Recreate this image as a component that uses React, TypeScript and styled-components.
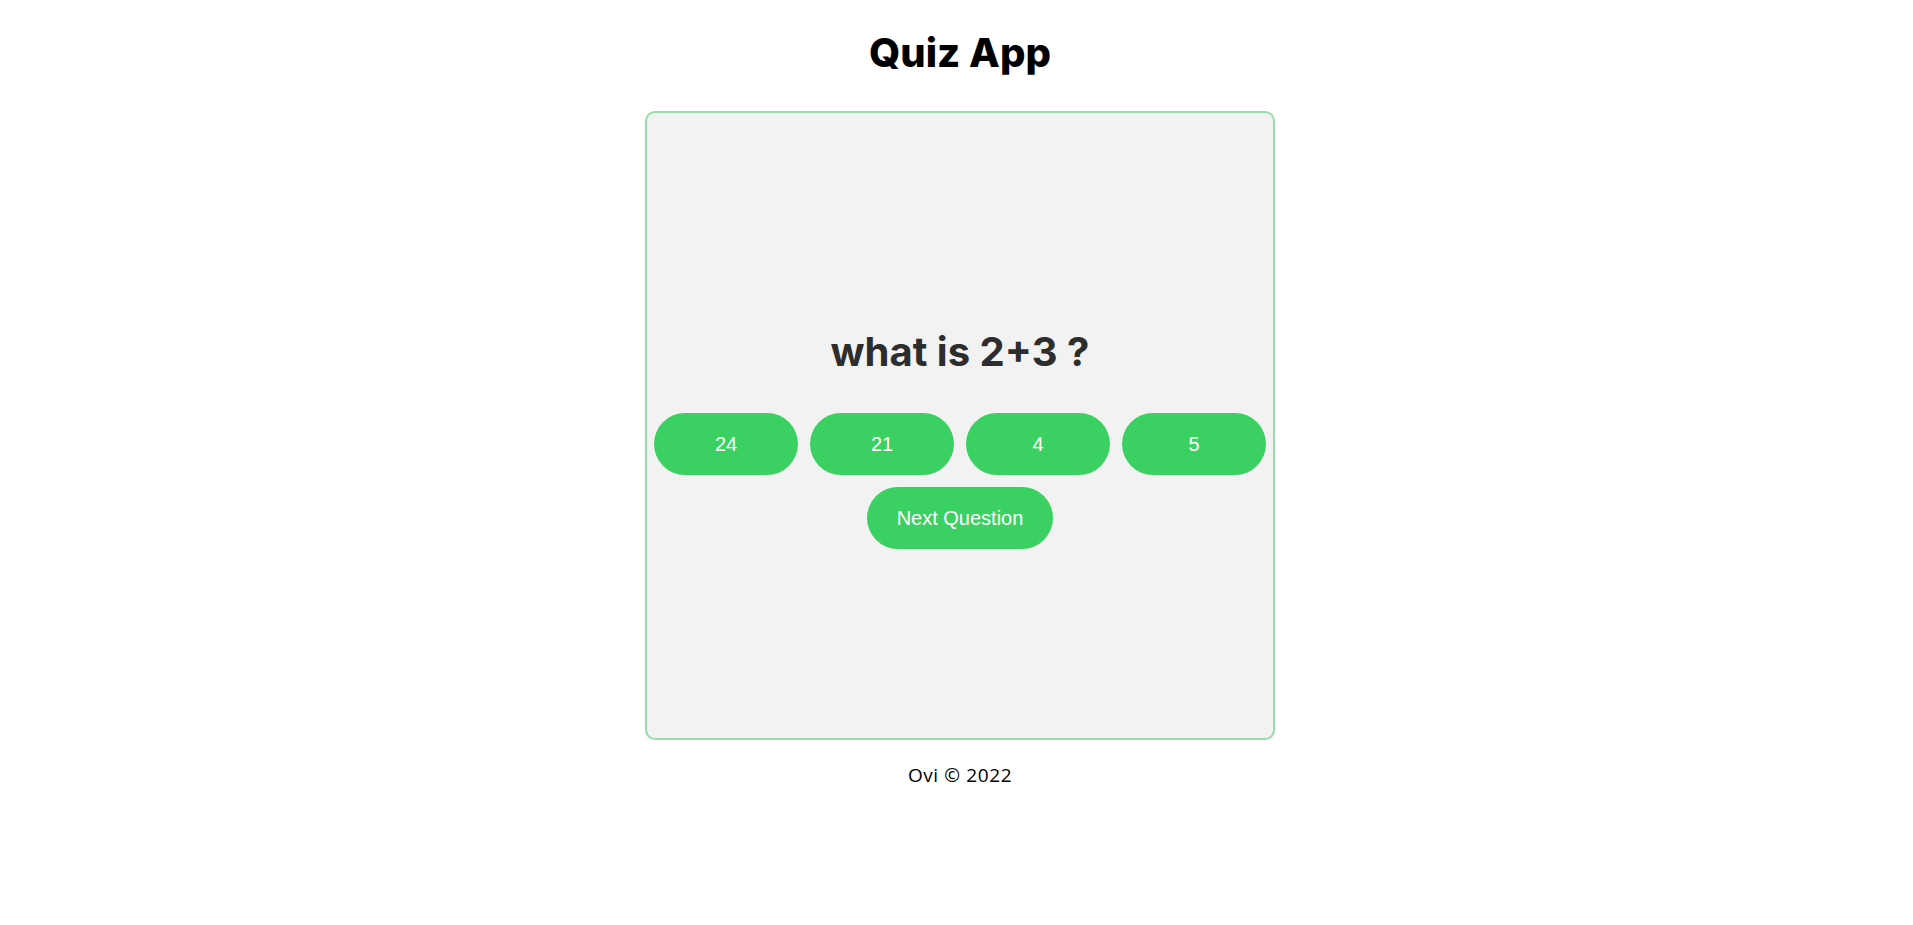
import React from 'react'
import styled, { createGlobalStyle } from 'styled-components'

const GlobalStyle = createGlobalStyle`
  html, body {
    margin: 0;
    padding: 0;
    background: #ffffff;
  }
  body {
    font-family: Inter, "Open Sans", sans-serif;
  }
`

const Page = styled.div`
  display: flex;
  flex-direction: column;
  align-items: center;
  padding-left: 7px;
`

const Title = styled.h1`
  margin: 30px 0 35px;
  font-family: Inter, sans-serif;
  font-size: 40px;
  line-height: 46px;
  font-weight: 800;
  color: #000000;
`

const Card = styled.div`
  box-sizing: border-box;
  width: 630px;
  height: 629px;
  padding-top: 26px;
  border: 2px solid #96dbaa;
  border-radius: 10px;
  background: #f2f2f2;
  display: flex;
  flex-direction: column;
  align-items: center;
  justify-content: center;
`

const Question = styled.h2`
  margin: 0 0 37px;
  font-family: Inter, sans-serif;
  font-size: 40px;
  line-height: 48px;
  font-weight: 700;
  color: #2d2d2d;
`

const Answers = styled.div`
  display: grid;
  grid-template-columns: repeat(4, 144px);
  gap: 12px;
  margin-bottom: 12px;
`

const Button = styled.button<{ $wide?: boolean }>`
  box-sizing: border-box;
  height: 62px;
  padding: 0 ${(p) => (p.$wide ? '30px' : '0')};
  border: none;
  border-radius: 31px;
  background: #3bd062;
  color: #ffffff;
  font-family: "Liberation Sans", Arial, sans-serif;
  font-size: 20px;
  cursor: pointer;
`

const Footer = styled.footer`
  margin-top: 23px;
  font-family: "Open Sans", sans-serif;
  font-size: 19px;
  line-height: 24px;
  letter-spacing: 0.6px;
  color: #000000;
`

const answers = ['24', '21', '4', '5']

export default function App() {
  return (
    <Page>
      <GlobalStyle />
      <Title>Quiz App</Title>
      <Card>
        <Question>what is 2+3 ?</Question>
        <Answers>
          {answers.map((a) => (
            <Button key={a}>{a}</Button>
          ))}
        </Answers>
        <Button $wide>Next Question</Button>
      </Card>
      <Footer>Ovi © 2022</Footer>
    </Page>
  )
}
